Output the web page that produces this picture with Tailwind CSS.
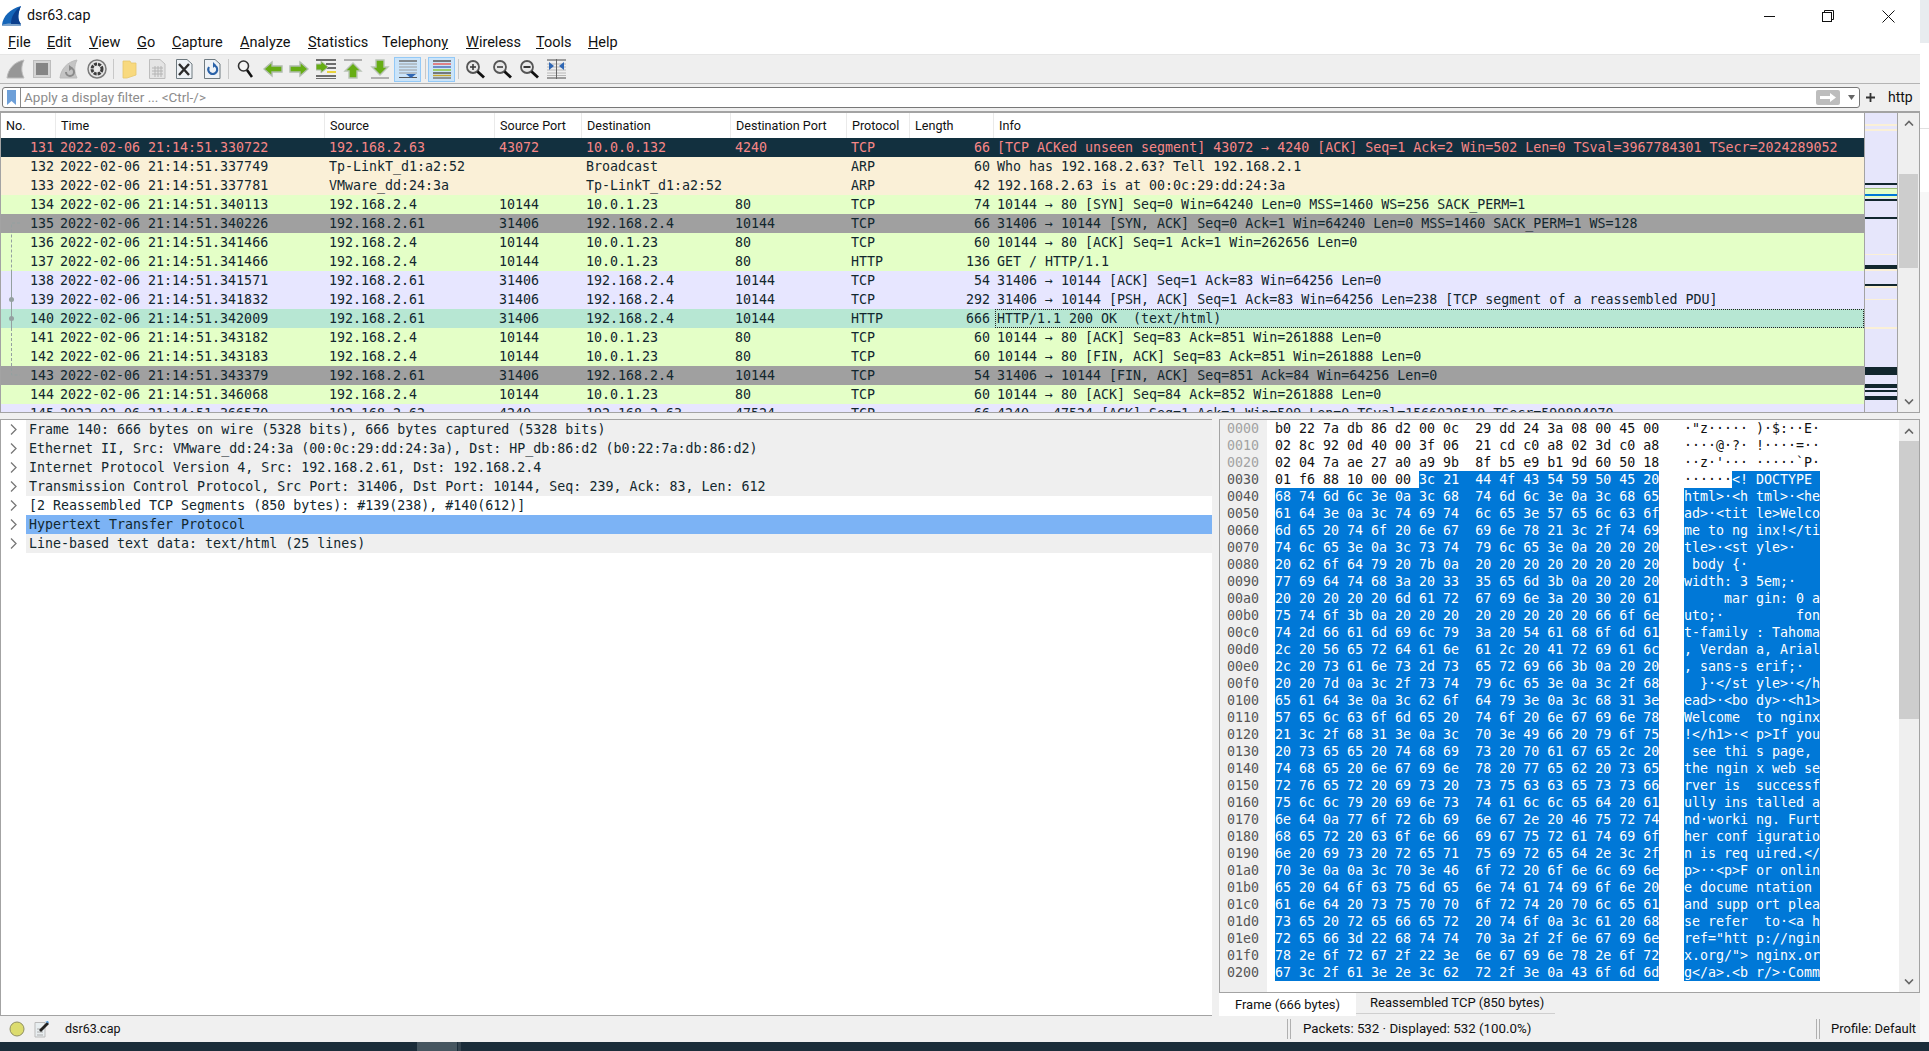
<!DOCTYPE html>
<html lang="en">
  <head>
    <meta charset="UTF-8" />
    <title>dsr63.cap</title>
    <script src="https://cdn.jsdelivr.net/npm/@tailwindcss/browser@4"></script>
  </head>
  <body class="bg-white overflow-hidden font-['Roboto',sans-serif] text-[#111]">
    <div class="flex flex-col w-[1929px] h-[1051px] overflow-hidden">
      <div class="flex h-[1042px]">
        <!-- window -->
        <div class="flex flex-col w-[1920px] bg-[#f0f0f0]">
          <div class="flex items-center h-[32px] bg-white relative">
            <svg width="20" height="20" viewBox="0 0 20 20" class="ml-[2px]">
              <path d="M0 19C1 10 8 3 19 0C16 7 15 13 19 19Z" fill="#1565b8" />
              <path d="M0 19C3 17 15 17 19 19L19 20L0 20Z" fill="#7ea4cc" />
              <path d="M9 18C9 10 13 5 19 0C16 7 15 13 19 18Z" fill="#0b3f8e" />
            </svg>
            <span class="ml-[5px] text-[14.3px] text-[#111]">dsr63.cap</span>
            <div class="ml-auto flex items-center">
              <div class="w-[11px] h-px bg-[#111] mr-[47px]"></div>
              <svg width="12" height="12" viewBox="0 0 12 12" class="mr-[48px]" fill="none" stroke="#111">
                <rect x="0.5" y="2.5" width="9" height="9" />
                <path d="M2.5 2.5V0.5H11.5V9.5H9.5" />
              </svg>
              <svg width="13" height="13" viewBox="0 0 13 13" class="mr-[25px]" stroke="#111"><path d="M0.5 0.5L12.5 12.5M12.5 0.5L0.5 12.5" /></svg>
            </div>
          </div>
          <div class="flex items-start h-[23px] pb-px bg-white border-b border-[#e6e6e6] text-[14.5px] leading-[21px] text-[#111] relative whitespace-nowrap">
            <span class="ml-[8px] w-[39px]"><u>F</u>ile</span>
            <span class="w-[42px]"><u>E</u>dit</span>
            <span class="w-[48px]"><u>V</u>iew</span>
            <span class="w-[35px]"><u>G</u>o</span>
            <span class="w-[68px]"><u>C</u>apture</span>
            <span class="w-[68px]"><u>A</u>nalyze</span>
            <span class="w-[74px]"><u>S</u>tatistics</span>
            <span class="w-[84px]">Telephon<u>y</u></span>
            <span class="w-[70px]"><u>W</u>ireless</span>
            <span class="w-[52px]"><u>T</u>ools</span>
            <span><u>H</u>elp</span>
          </div>
          <!-- toolbar -->
          <div class="flex items-center h-[29px] bg-[#efefef] border-b border-[#b4b4b4]">
            <svg width="20" height="20" viewBox="0 0 20 20" class="ml-[6px]"><path d="M1 19C2 10 8 3 18 1C15 7 15 13 18 19Z" fill="#979797" stroke="#bbb" /></svg>
            <svg width="18" height="18" viewBox="0 0 18 18" class="ml-[7px]"><rect x="0.5" y="0.5" width="17" height="17" fill="#d4d4d4" stroke="#bdbdbd" /><rect x="3" y="3" width="12" height="12" fill="#858585" /></svg>
            <svg width="20" height="20" viewBox="0 0 20 20" class="ml-[8px]"><path d="M1 19C2 10 8 3 18 1C15 7 15 13 18 19Z" fill="#c4c4c4" stroke="#bbb" /><path d="M7 13A4 4 0 1 0 11 9" fill="none" stroke="#8a8a8a" stroke-width="2" /><path d="M10 6L14 9L10 12Z" fill="#8a8a8a" /></svg>
            <svg width="20" height="20" viewBox="0 0 20 20" class="ml-[8px]"><circle cx="10" cy="10" r="9" fill="#e8e8e8" stroke="#7a7a7a" stroke-width="1.5" /><circle cx="10" cy="10" r="5" fill="none" stroke="#3c3c3c" stroke-width="3" stroke-dasharray="3 1" /><circle cx="10" cy="10" r="1.8" fill="#eee" /></svg>
            <div class="ml-[6px] w-px h-[20px] bg-[#c8c8c8]"></div>
            <svg width="15" height="20" viewBox="0 0 15 20" class="ml-[8px]"><path d="M1 2H8L9 4H14V16L5 19H1Z" fill="#f8d97e" stroke="#e6c66c" stroke-width="0.8" /></svg>
            <svg width="20" height="20" viewBox="0 0 20 20" class="ml-[10px]"><path d="M2.5 0.5H13L18 5V19.5H2.5Z" fill="#e4e4e4" stroke="#bdbdbd" /><path d="M5 9H16M5 12H16M5 15H16M8 7V18M11 7V18M14 7V18" stroke="#b4b4b4" /></svg>
            <svg width="20" height="20" viewBox="0 0 20 20" class="ml-[7px]"><path d="M2.5 0.5H13L18 5V19.5H2.5Z" fill="#eef2f6" stroke="#6f7a80" /><path d="M5 5L15 16M15 5L5 16" stroke="#2b2b2b" stroke-width="2.4" /></svg>
            <svg width="20" height="20" viewBox="0 0 20 20" class="ml-[8px]"><path d="M2.5 0.5H13L18 5V19.5H2.5Z" fill="#eef2f6" stroke="#6f7a80" /><path d="M7 8A4.5 4.5 0 1 0 11 6" fill="none" stroke="#2a62a8" stroke-width="2.2" /><path d="M11 3L14 6L11 9Z" fill="#2a62a8" /></svg>
            <div class="ml-[6px] w-px h-[20px] bg-[#c8c8c8]"></div>
            <svg width="16" height="20" viewBox="0 0 16 20" class="ml-[8px]"><circle cx="6.5" cy="7" r="5" fill="#f4f4f4" stroke="#333" stroke-width="1.6" /><path d="M10 11L15 18" stroke="#111" stroke-width="2.6" /></svg>
            <svg width="20" height="20" viewBox="0 0 20 20" class="ml-[10px]"><path d="M1 10L9 3V7H19V13H9V17Z" fill="#66ad14" stroke="#b0bcae" stroke-width="1.4" /></svg>
            <svg width="20" height="20" viewBox="0 0 20 20" class="ml-[6px]"><path d="M19 10L11 3V7H1V13H11V17Z" fill="#66ad14" stroke="#b0bcae" stroke-width="1.4" /></svg>
            <svg width="20" height="20" viewBox="0 0 20 20" class="ml-[7px]"><path d="M0 1H20M0 17H20M0 20H20M10 5H20M10 9H20" stroke="#444" stroke-width="1.4" /><path d="M11 13H20" stroke="#e8d23c" stroke-width="2" /><path d="M12 8L5 2V5H0V11H5V14Z" fill="#66ad14" stroke="#b0bcae" /></svg>
            <svg width="20" height="20" viewBox="0 0 20 20" class="ml-[7px]"><path d="M1 1H19" stroke="#b0b0b0" stroke-width="2" /><path d="M10 4L18 12H14V19H6V12H2Z" fill="#66ad14" stroke="#b9c4b6" stroke-width="1.4" /></svg>
            <svg width="20" height="20" viewBox="0 0 20 20" class="ml-[7px]"><path d="M1 19H19" stroke="#b0b0b0" stroke-width="2" /><path d="M10 16L18 8H14V1H6V8H2Z" fill="#66ad14" stroke="#b9c4b6" stroke-width="1.4" /></svg>
            <div class="flex items-center justify-center ml-[4px] w-[27px] h-[25px] bg-[#cbe4f9] border border-[#93c9f7]">
              <svg width="20" height="20" viewBox="0 0 20 20"><path d="M1 2H19M1 5H19M1 8H19M1 11H19M1 14H19" stroke="#9a9a9a" /><path d="M1 2H19" stroke="#555" /><path d="M1 18.500H19" stroke="#555" /><path d="M8 15H18L13 19Z" fill="#2f67b4" /></svg>
            </div>
            <div class="ml-[4px] w-px h-[20px] bg-[#c8c8c8]"></div>
            <div class="flex items-center justify-center ml-[2px] w-[27px] h-[25px] bg-[#cbe4f9] border border-[#93c9f7]">
              <svg width="20" height="20" viewBox="0 0 20 20" stroke-width="1.5"><path d="M1 2H19" stroke="#555" /><path d="M1 5H19" stroke="#e46060" /><path d="M1 8H19" stroke="#4f6fb8" /><path d="M1 11H19" stroke="#8cc63c" /><path d="M1 14H19" stroke="#555" /><path d="M1 16.500H19" stroke="#c9a82c" /><path d="M1 19H19" stroke="#777" /></svg>
            </div>
            <div class="ml-[3px] w-px h-[20px] bg-[#c8c8c8]"></div>
            <svg width="20" height="20" viewBox="0 0 20 20" class="ml-[6px]"><circle cx="8" cy="8" r="6" fill="#e8e8e8" stroke="#555" stroke-width="1.8" /><path d="M5 8H11M8 5V11" stroke="#333" stroke-width="1.5" /><path d="M12.500 12.500L19 18.500" stroke="#111" stroke-width="2.8" /></svg>
            <svg width="20" height="20" viewBox="0 0 20 20" class="ml-[7px]"><circle cx="8" cy="8" r="6" fill="#e8e8e8" stroke="#555" stroke-width="1.8" /><path d="M5 8H11" stroke="#333" stroke-width="1.5" /><path d="M12.500 12.500L19 18.500" stroke="#111" stroke-width="2.8" /></svg>
            <svg width="20" height="20" viewBox="0 0 20 20" class="ml-[7px]"><circle cx="8" cy="8" r="6" fill="#e8e8e8" stroke="#555" stroke-width="1.8" /><path d="M4.500 8H11.500" stroke="#333" stroke-width="2" /><path d="M12.500 12.500L19 18.500" stroke="#111" stroke-width="2.8" /></svg>
            <svg width="19" height="20" viewBox="0 0 19 20" class="ml-[8px]"><path d="M0 1H19M0 19H19M0 5H19M0 8H19M0 11H19M0 14H19M0 16.500H19" stroke="#b8b8b8" /><path d="M0 1H19M0 19H19M9.500 0V20" stroke="#666" /><path d="M2 3L7 7L2 11ZM17 3L12 7L17 11Z" fill="#2f67b4" /></svg>
          </div>
          <!-- display filter -->
          <div class="flex items-center h-[27px] bg-[#efefef] text-[13px]">
            <div class="flex items-center ml-[2px] w-[1858px] h-[21px] bg-white border border-[#777] rounded-[3px]">
              <div class="flex items-center justify-center w-[18px] h-full border-r border-[#8a8a8a]">
                <svg width="9" height="15" viewBox="0 0 9 15"><path d="M0 0H9V15L4.500 11L0 15Z" fill="#6d9fd8" /></svg>
              </div>
              <span class="ml-[3px] text-[#8c8c8c] text-[13.500px]">Apply a display filter ... &lt;Ctrl-/&gt;</span>
              <div class="ml-auto flex items-center justify-center w-[24px] h-[15px] rounded-[2px] bg-[#bdbdbd]">
                <svg width="16" height="9" viewBox="0 0 16 9"><path d="M0 3H10V0L16 4.500L10 9V6H0Z" fill="#fff" /></svg>
              </div>
              <svg width="7" height="5" viewBox="0 0 7 5" class="ml-[8px] mr-[4px]"><path d="M0 0H7L3.500 5Z" fill="#666" /></svg>
            </div>
            <svg width="9" height="9" viewBox="0 0 9 9" class="ml-[6px]"><path d="M4.500 0V9M0 4.500H9" stroke="#333" stroke-width="1.8" /></svg>
            <span class="ml-[13px] text-[#111] text-[14px]">http</span>
          </div>
          <!-- packet list -->
          <div class="flex h-[302px] border-y-2 border-x border-[#a3a3a3] border-b-[1px]">
            <div class="flex flex-col w-[1863px] bg-white overflow-hidden">
              <div class="grid grid-cols-[55px_269px_170px_87px_149px_116px_63px_84px_1fr] h-[25px] shrink-0 text-[12.6px] leading-[25px] text-[#111] whitespace-nowrap">
                <span class="pl-[5px] border-r border-[#eaeaea]">No.</span>
                <span class="pl-[5px] border-r border-[#eaeaea]">Time</span>
                <span class="pl-[5px] border-r border-[#eaeaea]">Source</span>
                <span class="pl-[5px] border-r border-[#eaeaea]">Source Port</span>
                <span class="pl-[5px] border-r border-[#eaeaea]">Destination</span>
                <span class="pl-[5px] border-r border-[#eaeaea]">Destination Port</span>
                <span class="pl-[5px] border-r border-[#eaeaea]">Protocol</span>
                <span class="pl-[5px] border-r border-[#eaeaea]">Length</span>
                <span class="pl-[5px]">Info</span>
              </div>
              <div class="relative flex-1 overflow-hidden">
                <div id="packets"></div>
                <svg width="30" height="270" class="absolute left-0 top-0" fill="none">
                  <path d="M19 85H10.500V133M10.500 190V237H19" stroke="#94a0a0" stroke-dasharray="3 2" />
                  <path d="M10.500 133V190" stroke="#94a0a0" />
                  <circle cx="10.500" cy="161.500" r="2.500" fill="#94a0a0" />
                  <circle cx="10.500" cy="180.500" r="2.500" fill="#94a0a0" />
                </svg>
              </div>
            </div>
            <!-- minimap -->
            <div class="relative w-[34px] bg-[#e6e6fb] border-x border-[#a3a3a3]">
              <div class="absolute inset-x-0 top-[11px] h-[2px] bg-[#faf0d7]"></div>
              <div class="absolute inset-x-0 top-[16px] h-[2px] bg-[#faf0d7]"></div>
              <div class="absolute inset-x-0 top-[70px] h-[2px] bg-[#12272e]"></div>
              <div class="absolute inset-x-0 top-[75px] h-px bg-[#9fc07a]"></div>
              <div class="absolute inset-x-0 top-[76px] h-[5px] bg-[#e4ffc7]"></div>
              <div class="absolute inset-x-0 top-[81px] h-[2px] bg-[#0078d7]"></div>
              <div class="absolute inset-x-0 top-[83px] h-[2px] bg-[#e4ffc7]"></div>
              <div class="absolute inset-x-0 top-[86px] h-[2px] bg-[#12272e]"></div>
              <div class="absolute inset-x-0 top-[104px] h-[2px] bg-[#12272e]"></div>
              <div class="absolute inset-x-0 top-[141px] h-px bg-[#faf0d7]"></div>
              <div class="absolute inset-x-0 top-[152px] h-[4px] bg-[#12272e]"></div>
              <div class="absolute inset-x-0 top-[156px] h-[2px] bg-[#faf0d7]"></div>
              <div class="absolute inset-x-0 top-[171px] h-[2px] bg-[#12272e]"></div>
              <div class="absolute inset-x-0 top-[173px] h-[2px] bg-[#faf0d7]"></div>
              <div class="absolute inset-x-0 top-[186px] h-px bg-[#faf0d7]"></div>
              <div class="absolute inset-x-0 top-[214px] h-[2px] bg-[#faf0d7]"></div>
              <div class="absolute inset-x-0 top-[254px] h-[8px] bg-[#12272e]"></div>
              <div class="absolute inset-x-0 top-[271px] h-[4px] bg-[#12272e]"></div>
              <div class="absolute inset-x-0 top-[277px] h-[2px] bg-[#12272e]"></div>
              <div class="absolute inset-x-0 top-[283px] h-[4px] bg-[#12272e]"></div>
            </div>
            <!-- scrollbar -->
            <div class="flex flex-col items-center flex-1 bg-[#efefef]">
              <div class="flex items-center justify-center h-[20px] shrink-0">
                <svg width="10" height="6" viewBox="0 0 10 6" fill="none" stroke="#666" stroke-width="1.6"><path d="M1 5.500L5 1.500L9 5.500" /></svg>
              </div>
              <div class="w-[19px] h-[94px] mt-[41px] bg-[#cdcdcd]"></div>
              <div class="flex items-center justify-center h-[20px] mt-auto shrink-0">
                <svg width="10" height="6" viewBox="0 0 10 6" fill="none" stroke="#666" stroke-width="1.6"><path d="M1 0.500L5 4.500L9 0.500" /></svg>
              </div>
            </div>
          </div>
          <div class="h-[6px] shrink-0"></div>
          <!-- details and bytes -->
          <div class="flex h-[597px]">
            <div id="details" class="w-[1212px] bg-white border border-[#a3a3a3] border-r-0"></div>
            <div class="w-[7px]"></div>
            <div class="flex flex-col flex-1">
              <div class="flex h-[574px] bg-white border border-[#a3a3a3] font-['DejaVu_Sans_Mono',monospace] text-[13.300px] leading-[17px] whitespace-pre overflow-hidden">
                <div id="offsets" class="w-[47px] pl-[7px] bg-[#efefef] shrink-0"></div>
                <div id="hex" class="w-[417px] pl-[8px] shrink-0 text-[#111]"></div>
                <div id="ascii" class="flex-1 text-[#111]"></div>
                <div class="flex flex-col items-center w-[20px] shrink-0 bg-[#efefef]">
                  <div class="flex items-center justify-center h-[21px] shrink-0">
                    <svg width="10" height="6" viewBox="0 0 10 6" fill="none" stroke="#666" stroke-width="1.6"><path d="M1 5.500L5 1.500L9 5.500" /></svg>
                  </div>
                  <div class="w-full h-[278px] bg-[#cdcdcd]"></div>
                  <div class="flex items-center justify-center h-[21px] mt-auto shrink-0">
                    <svg width="10" height="6" viewBox="0 0 10 6" fill="none" stroke="#666" stroke-width="1.6"><path d="M1 0.500L5 4.500L9 0.500" /></svg>
                  </div>
                </div>
              </div>
              <div class="flex items-start flex-1 text-[13px] text-[#111] whitespace-nowrap">
                <div class="flex items-center justify-center w-[137px] h-full bg-white">Frame (666 bytes)</div>
                <div class="flex items-center h-[21px] w-[199px] pl-[14px] border-b border-[#cfcfcf]">Reassembled TCP (850 bytes)</div>
              </div>
            </div>
          </div>
          <!-- status bar -->
          <div class="flex items-center h-[26px] text-[13px] text-[#111] whitespace-nowrap">
            <svg width="16" height="16" viewBox="0 0 16 16" class="ml-[9px]"><circle cx="8" cy="8" r="7" fill="#dcdc6e" stroke="#8f8f60" /></svg>
            <svg width="15" height="17" viewBox="0 0 15 17" class="ml-[9px]"><path d="M1 1.500H11V16H1Z" fill="#e8eef0" stroke="#bbb" /><path d="M3 8H9M3 11H9M3 14H9" stroke="#aaa" /><path d="M5 9L13 1L15 3L7 11Z" fill="#222" /><path d="M11 1L14 0L15 2Z" fill="#3a8fd8" /></svg>
            <span class="ml-[16px] w-[57px] text-[12.5px]">dsr63.cap</span>
            <div class="ml-[1165px] w-[4px] h-[20px] border-x border-[#b0b0b0]"></div>
            <span class="ml-[12px] text-[13.300px]">Packets: 532 · Displayed: 532 (100.0%)</span>
            <div class="ml-auto w-[4px] h-[20px] border-x border-[#b0b0b0]"></div>
            <span class="ml-[11px] w-[86px] mr-[3px]">Profile: Default</span>
          </div>
        </div>
        <!-- desktop behind the window -->
        <div class="flex flex-col flex-1">
          <div class="h-[43px] bg-[#e8ecef]"></div>
          <div class="h-[86px] bg-white border-b border-[#e0e0e0]"></div>
          <div class="h-[63px] bg-white"></div>
          <div class="flex-1 bg-[#f7f7f7]"></div>
        </div>
      </div>
      <!-- taskbar -->
      <div class="flex h-[9px] bg-[#1b2d3a]">
        <div class="ml-[417px] w-[40px] bg-[#465660]"></div>
        <div class="ml-[1px] w-[3px] bg-[#33434e]"></div>
      </div>
    </div>

    <script>
      const packets = [
        ["131", "2022-02-06 21:14:51.330722", "192.168.2.63", "43072", "10.0.0.132", "4240", "TCP", "66", "[TCP ACKed unseen segment] 43072 → 4240 [ACK] Seq=1 Ack=2 Win=502 Len=0 TSval=3967784301 TSecr=2024289052", "bad"],
        ["132", "2022-02-06 21:14:51.337749", "Tp-LinkT_d1:a2:52", "", "Broadcast", "", "ARP", "60", "Who has 192.168.2.63? Tell 192.168.2.1", "arp"],
        ["133", "2022-02-06 21:14:51.337781", "VMware_dd:24:3a", "", "Tp-LinkT_d1:a2:52", "", "ARP", "42", "192.168.2.63 is at 00:0c:29:dd:24:3a", "arp"],
        ["134", "2022-02-06 21:14:51.340113", "192.168.2.4", "10144", "10.0.1.23", "80", "TCP", "74", "10144 → 80 [SYN] Seq=0 Win=64240 Len=0 MSS=1460 WS=256 SACK_PERM=1", "green"],
        ["135", "2022-02-06 21:14:51.340226", "192.168.2.61", "31406", "192.168.2.4", "10144", "TCP", "66", "31406 → 10144 [SYN, ACK] Seq=0 Ack=1 Win=64240 Len=0 MSS=1460 SACK_PERM=1 WS=128", "grey"],
        ["136", "2022-02-06 21:14:51.341466", "192.168.2.4", "10144", "10.0.1.23", "80", "TCP", "60", "10144 → 80 [ACK] Seq=1 Ack=1 Win=262656 Len=0", "green"],
        ["137", "2022-02-06 21:14:51.341466", "192.168.2.4", "10144", "10.0.1.23", "80", "HTTP", "136", "GET / HTTP/1.1", "green"],
        ["138", "2022-02-06 21:14:51.341571", "192.168.2.61", "31406", "192.168.2.4", "10144", "TCP", "54", "31406 → 10144 [ACK] Seq=1 Ack=83 Win=64256 Len=0", "tcp"],
        ["139", "2022-02-06 21:14:51.341832", "192.168.2.61", "31406", "192.168.2.4", "10144", "TCP", "292", "31406 → 10144 [PSH, ACK] Seq=1 Ack=83 Win=64256 Len=238 [TCP segment of a reassembled PDU]", "tcp"],
        ["140", "2022-02-06 21:14:51.342009", "192.168.2.61", "31406", "192.168.2.4", "10144", "HTTP", "666", "HTTP/1.1 200 OK  (text/html)", "sel"],
        ["141", "2022-02-06 21:14:51.343182", "192.168.2.4", "10144", "10.0.1.23", "80", "TCP", "60", "10144 → 80 [ACK] Seq=83 Ack=851 Win=261888 Len=0", "green"],
        ["142", "2022-02-06 21:14:51.343183", "192.168.2.4", "10144", "10.0.1.23", "80", "TCP", "60", "10144 → 80 [FIN, ACK] Seq=83 Ack=851 Win=261888 Len=0", "green"],
        ["143", "2022-02-06 21:14:51.343379", "192.168.2.61", "31406", "192.168.2.4", "10144", "TCP", "54", "31406 → 10144 [FIN, ACK] Seq=851 Ack=84 Win=64256 Len=0", "grey"],
        ["144", "2022-02-06 21:14:51.346068", "192.168.2.4", "10144", "10.0.1.23", "80", "TCP", "60", "10144 → 80 [ACK] Seq=84 Ack=852 Win=261888 Len=0", "green"],
        ["145", "2022-02-06 21:14:51.366570", "192.168.2.62", "4240", "192.168.2.63", "47524", "TCP", "66", "4240 → 47524 [ACK] Seq=1 Ack=1 Win=509 Len=0 TSval=1566038519 TSecr=599894070", "tcp"],
      ];
      const rowColors = {
        bad: "bg-[#12303f] text-[#f78787]",
        arp: "bg-[#faf0d7] text-[#12272e]",
        green: "bg-[#e4ffc7] text-[#12272e]",
        grey: "bg-[#a0a0a0] text-[#12272e]",
        tcp: "bg-[#e7e6ff] text-[#12272e]",
        sel: "bg-[#b7e7d3] text-[#12272e]",
      };

      const list = document.getElementById("packets");
      packets.forEach((p) => {
        const row = document.createElement("div");
        row.className =
          "grid grid-cols-[55px_269px_170px_87px_149px_116px_63px_84px_1fr] h-[19px] font-['DejaVu_Sans_Mono',monospace] text-[13.300px] leading-[19px] whitespace-pre " +
          rowColors[p[9]];
        p.slice(0, 9).forEach((text, i) => {
          const cell = document.createElement("span");
          if (i === 0) cell.className = "text-right pr-[2px]";
          else if (i === 7) cell.className = "text-right pr-[4px]";
          else if (i === 8 && p[0] === "140") cell.className = "ml-[1px] pl-[1px] border border-dotted border-[#222] leading-[17px]";
          else if (i === 8) cell.className = "pl-[3px]";
          else cell.className = "pl-[4px]";
          cell.textContent = text;
          row.appendChild(cell);
        });
        list.appendChild(row);
      });

      const details = [
        ["Frame 140: 666 bytes on wire (5328 bits), 666 bytes captured (5328 bits)", "bg-[#efefef]"],
        ["Ethernet II, Src: VMware_dd:24:3a (00:0c:29:dd:24:3a), Dst: HP_db:86:d2 (b0:22:7a:db:86:d2)", "bg-[#efefef]"],
        ["Internet Protocol Version 4, Src: 192.168.2.61, Dst: 192.168.2.4", "bg-[#efefef]"],
        ["Transmission Control Protocol, Src Port: 31406, Dst Port: 10144, Seq: 239, Ack: 83, Len: 612", "bg-[#efefef]"],
        ["[2 Reassembled TCP Segments (850 bytes): #139(238), #140(612)]", "bg-white"],
        ["Hypertext Transfer Protocol", "bg-[#7cb3f5]"],
        ["Line-based text data: text/html (25 lines)", "bg-[#efefef]"],
      ];
      const detailPane = document.getElementById("details");
      details.forEach(([text, color]) => {
        const row = document.createElement("div");
        row.className = "flex h-[19px] font-['DejaVu_Sans_Mono',monospace] text-[13.300px] leading-[19px] whitespace-pre text-[#12272e]";
        row.innerHTML = `<div class="flex items-center justify-center w-[25px] shrink-0"><svg width="7" height="11" viewBox="0 0 7 11" fill="none" stroke="#777" stroke-width="1.300"><path d="M1 0.500L6 5.500L1 10.500" /></svg></div>`;
        const label = document.createElement("div");
        label.className = "flex-1 pl-[3px] " + color;
        label.textContent = text;
        row.appendChild(label);
        detailPane.appendChild(row);
      });

      const bytes = [
        "b0 22 7a db 86 d2 00 0c 29 dd 24 3a 08 00 45 00",
        "02 8c 92 0d 40 00 3f 06 21 cd c0 a8 02 3d c0 a8",
        "02 04 7a ae 27 a0 a9 9b 8f b5 e9 b1 9d 60 50 18",
        "01 f6 88 10 00 00 3c 21 44 4f 43 54 59 50 45 20",
        "68 74 6d 6c 3e 0a 3c 68 74 6d 6c 3e 0a 3c 68 65",
        "61 64 3e 0a 3c 74 69 74 6c 65 3e 57 65 6c 63 6f",
        "6d 65 20 74 6f 20 6e 67 69 6e 78 21 3c 2f 74 69",
        "74 6c 65 3e 0a 3c 73 74 79 6c 65 3e 0a 20 20 20",
        "20 62 6f 64 79 20 7b 0a 20 20 20 20 20 20 20 20",
        "77 69 64 74 68 3a 20 33 35 65 6d 3b 0a 20 20 20",
        "20 20 20 20 20 6d 61 72 67 69 6e 3a 20 30 20 61",
        "75 74 6f 3b 0a 20 20 20 20 20 20 20 20 66 6f 6e",
        "74 2d 66 61 6d 69 6c 79 3a 20 54 61 68 6f 6d 61",
        "2c 20 56 65 72 64 61 6e 61 2c 20 41 72 69 61 6c",
        "2c 20 73 61 6e 73 2d 73 65 72 69 66 3b 0a 20 20",
        "20 20 7d 0a 3c 2f 73 74 79 6c 65 3e 0a 3c 2f 68",
        "65 61 64 3e 0a 3c 62 6f 64 79 3e 0a 3c 68 31 3e",
        "57 65 6c 63 6f 6d 65 20 74 6f 20 6e 67 69 6e 78",
        "21 3c 2f 68 31 3e 0a 3c 70 3e 49 66 20 79 6f 75",
        "20 73 65 65 20 74 68 69 73 20 70 61 67 65 2c 20",
        "74 68 65 20 6e 67 69 6e 78 20 77 65 62 20 73 65",
        "72 76 65 72 20 69 73 20 73 75 63 63 65 73 73 66",
        "75 6c 6c 79 20 69 6e 73 74 61 6c 6c 65 64 20 61",
        "6e 64 0a 77 6f 72 6b 69 6e 67 2e 20 46 75 72 74",
        "68 65 72 20 63 6f 6e 66 69 67 75 72 61 74 69 6f",
        "6e 20 69 73 20 72 65 71 75 69 72 65 64 2e 3c 2f",
        "70 3e 0a 0a 3c 70 3e 46 6f 72 20 6f 6e 6c 69 6e",
        "65 20 64 6f 63 75 6d 65 6e 74 61 74 69 6f 6e 20",
        "61 6e 64 20 73 75 70 70 6f 72 74 20 70 6c 65 61",
        "73 65 20 72 65 66 65 72 20 74 6f 0a 3c 61 20 68",
        "72 65 66 3d 22 68 74 74 70 3a 2f 2f 6e 67 69 6e",
        "78 2e 6f 72 67 2f 22 3e 6e 67 69 6e 78 2e 6f 72",
        "67 3c 2f 61 3e 2e 3c 62 72 2f 3e 0a 43 6f 6d 6d",
      ];

      // selected field starts at byte 0x36 of the frame
      function addLine(pane, plain, picked) {
        const line = document.createElement("div");
        line.className = "h-[17px]";
        line.append(plain);
        if (picked) {
          const sel = document.createElement("span");
          sel.className = "inline-block h-[17px] bg-[#0078d7] text-white";
          sel.textContent = picked;
          line.appendChild(sel);
        }
        pane.appendChild(line);
      }

      bytes.forEach((row, r) => {
        const vals = row.split(" ");
        const chars = vals.map((b) => {
          const c = parseInt(b, 16);
          return c >= 32 && c < 127 ? String.fromCharCode(c) : "·";
        });
        const hexText = vals.slice(0, 8).join(" ") + "  " + vals.slice(8).join(" ");
        const asciiText = chars.slice(0, 8).join("") + " " + chars.slice(8).join("");
        const from = r < 3 ? 99 : r === 3 ? 6 : 0;

        const off = document.createElement("div");
        off.className = r < 3 ? "h-[17px] text-[#a2a2a2]" : "h-[17px] text-[#555]";
        off.textContent = (r * 16).toString(16).padStart(4, "0");
        document.getElementById("offsets").appendChild(off);

        if (from === 99) {
          addLine(document.getElementById("hex"), hexText, "");
          addLine(document.getElementById("ascii"), asciiText, "");
        } else {
          addLine(document.getElementById("hex"), hexText.slice(0, from * 3), hexText.slice(from * 3));
          addLine(document.getElementById("ascii"), asciiText.slice(0, from), asciiText.slice(from));
        }
      });
    </script>
  </body>
</html>
